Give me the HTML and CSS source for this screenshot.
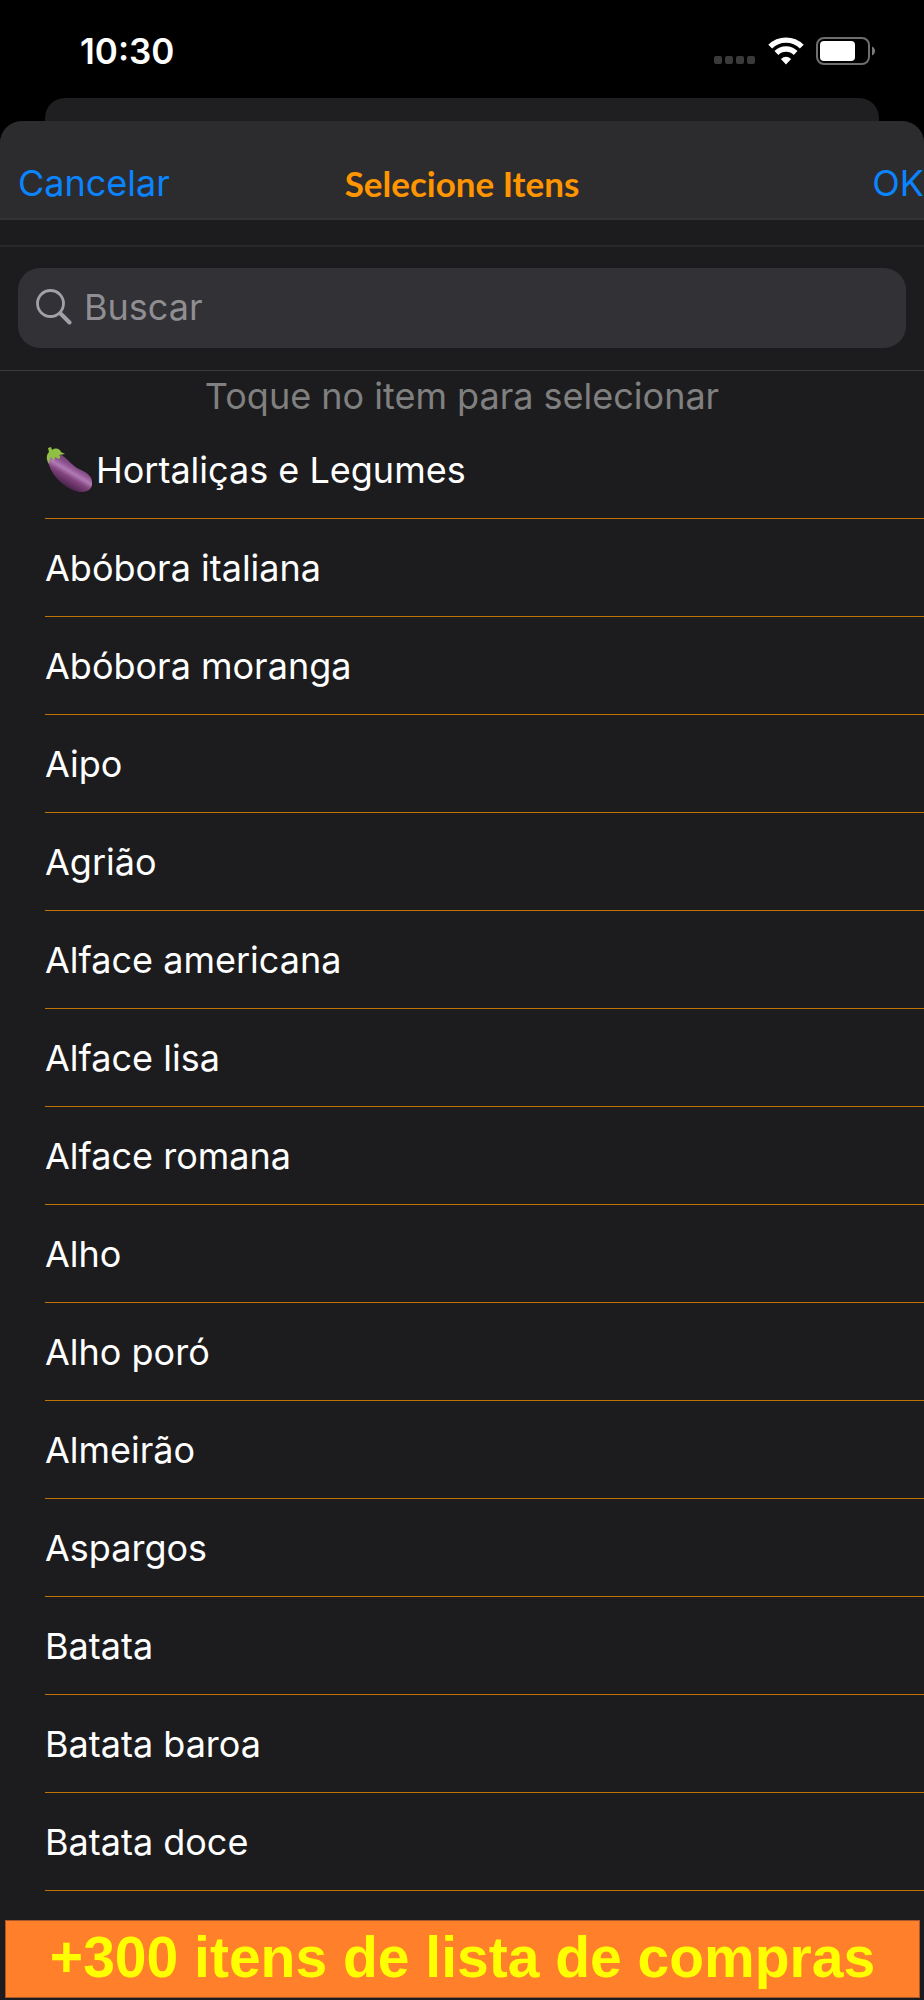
FILE: index.html
```html
<!DOCTYPE html>
<html lang="pt-BR">
<head>
    <meta charset="UTF-8">
    <meta name="viewport" content="width=device-width, initial-scale=1.0">
    <link rel="stylesheet" href="styles.css">
    <title>Selecione Itens</title>
</head>

<body>
    <div class="status-bar">
        <span class="time">10:30</span>
        <div class="status-icons">
            <svg class="signal" width="42" height="8" viewBox="0 0 42 8" fill="#3a3a3a">
                <rect x="0" y="0" width="8" height="8" rx="2"/>
                <rect x="11" y="0" width="8" height="8" rx="2"/>
                <rect x="22" y="0" width="8" height="8" rx="2"/>
                <rect x="33" y="0" width="8" height="8" rx="2"/>
            </svg>
            <svg class="wifi" width="36" height="28" viewBox="0 0 36 28" fill="none" stroke="#fff" stroke-width="5.4">
                <path d="M2.2 9.6 A22.5 22.5 0 0 1 33.8 9.6"/>
                <path d="M8.4 16 A13.6 13.6 0 0 1 27.6 16"/>
                <path d="M18 27.5 L12.9 22 Q18 17.4 23.1 22 Z" fill="#fff" stroke="none"/>
            </svg>
            <svg class="battery" width="60" height="28" viewBox="0 0 60 28">
                <rect x="1" y="1" width="52" height="26" rx="7" fill="none" stroke="#6e6e6e" stroke-width="2"/>
                <rect x="4" y="4" width="35" height="20" rx="4" fill="#fff"/>
                <path d="M56 9.500 Q59 11 59 14 Q59 17 56 18.500 Z" fill="#7a7a7a"/>
            </svg>
        </div>
    </div>

    <div class="back-sheet"></div>

    <main class="sheet">
        <header>
            <button class="cancel">Cancelar</button>
            <h1>Selecione Itens</h1>
            <button class="ok">OK</button>
        </header>

        <div class="search">
            <label class="search-box" for="searchInput">
                <svg width="36" height="36" viewBox="0 0 36 36" fill="none" stroke="#a0a0a8" stroke-linecap="round">
                    <circle cx="14.500" cy="14.500" r="13" stroke-width="2.800"/>
                    <path d="M24.500 24.500 L33.500 33.500" stroke-width="4"/>
                </svg>
                <input type="text" id="searchInput" placeholder="Buscar" aria-label="Buscar">
            </label>
        </div>

        <p class="hint">Toque no item para selecionar</p>

        <ul class="items">
            <li class="category">
                <svg width="49" height="48" viewBox="0 0 49 48">
                    <defs>
                        <linearGradient id="skin" x1="0.700" y1="0.200" x2="0.300" y2="0.800">
                            <stop offset="0" stop-color="#5c3060"/>
                            <stop offset="0.300" stop-color="#8d5190"/>
                            <stop offset="0.480" stop-color="#b07bb4"/>
                            <stop offset="0.650" stop-color="#83447f"/>
                            <stop offset="1" stop-color="#452048"/>
                        </linearGradient>
                    </defs>
                    <path d="M3 14 C4 25 15 39 28 44 C36 48 46 46 47 39 C48 31 43 27 36 24 C27 20 24 14 17 9 C11 5 3 7 3 14 Z" fill="url(#skin)"/>
                    <path d="M3 2 L6 1 L7 4 C11 1 15 3 16 6 L20 8 L14 9 C16 11 15 12 14 13 L10 11 L9 15 L6 11 C4 13 4 15 4 18 C1 14 1 9 4 6 Z" fill="#8fc044"/>
                </svg>
                <span>Hortaliças e Legumes</span>
            </li>
            <li><button>Abóbora italiana</button></li>
            <li><button>Abóbora moranga</button></li>
            <li><button>Aipo</button></li>
            <li><button>Agrião</button></li>
            <li><button>Alface americana</button></li>
            <li><button>Alface lisa</button></li>
            <li><button>Alface romana</button></li>
            <li><button>Alho</button></li>
            <li><button>Alho poró</button></li>
            <li><button>Almeirão</button></li>
            <li><button>Aspargos</button></li>
            <li><button>Batata</button></li>
            <li><button>Batata baroa</button></li>
            <li><button>Batata doce</button></li>
        </ul>

        <div class="banner">+300 itens de lista de compras</div>
    </main>
</body>

</html>
```
FILE: styles.css
```css
* {
    box-sizing: border-box;
}

body {
    font-family: Inter, "Liberation Sans", sans-serif;
    font-size: 36px;
    line-height: 44px;
    margin: 0;
    background-color: #000;
    color: #fff;
}

button {
    font: inherit;
    background: none;
    border: none;
    padding: 0;
    cursor: pointer;
}

.status-bar {
    display: flex;
    align-items: center;
    justify-content: space-between;
    height: 98px;
    padding: 4px 48px 0 80px;
}

.time {
    font-size: 35px;
    font-weight: 600;
}

.status-icons {
    display: flex;
    align-items: center;
    gap: 12px;
}

.signal {
    margin-top: 18px;
}

.back-sheet {
    height: 23px;
    margin: 0 45px;
    background-color: #1f1f21;
    border-radius: 20px 20px 0 0;
}

.sheet {
    background-color: #1c1c1e;
    border-radius: 22px 22px 0 0;
    overflow: hidden;
    padding-bottom: 2px;
}

header {
    display: grid;
    grid-template-columns: 1fr auto 1fr;
    align-items: center;
    height: 99px;
    padding-top: 26px;
    background-color: #2c2c2e;
    border-bottom: 2px solid #323234;
}

header button {
    color: #0a84ff;
}

.cancel {
    justify-self: start;
    margin-left: 18px;
}

.ok {
    justify-self: end;
}

h1 {
    margin: 0;
    font-family: "Marker Felt", Lato, sans-serif;
    font-size: 35px;
    font-weight: 700;
    color: #ff9500;
}

.search {
    margin-top: 25px;
    padding: 21px 18px 22px;
    border-top: 2px solid #29292b;
    border-bottom: 1px solid #3a3a3c;
}

.search-box {
    display: flex;
    align-items: center;
    gap: 12px;
    height: 80px;
    padding: 0 18px 2px;
    background-color: #323136;
    border-radius: 22px;
}

.search-box input {
    flex: 1;
    min-width: 0;
    padding: 0;
    font: inherit;
    color: #fff;
    background: none;
    border: none;
    outline: none;
}

.search-box input::placeholder {
    color: #8e8e93;
    opacity: 1;
}

.hint {
    margin: 0;
    padding: 3px 0;
    text-align: center;
    color: #808080;
}

.items {
    list-style: none;
    margin: 0;
    padding: 0 0 0 45px;
}

.items li {
    display: flex;
    align-items: center;
    height: 98px;
    border-bottom: 1px solid #c07204;
}

.items li button {
    flex: 1;
    height: 100%;
    text-align: left;
    color: #fff;
}

.category svg {
    margin-right: 2px;
}

.banner {
    margin: 29px 4px 0 5px;
    height: 78px;
    border: 1px solid #a9572a;
    background-color: #ff7f2a;
    color: #ff0;
    font-family: "Liberation Sans", Arial, sans-serif;
    font-size: 57px;
    font-weight: 700;
    line-height: 72px;
    text-align: center;
    white-space: nowrap;
}
```
